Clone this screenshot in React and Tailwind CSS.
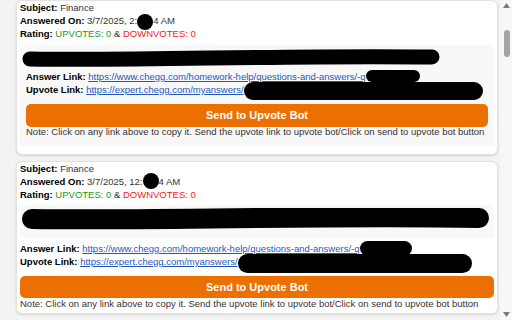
import React from 'react';

// redaction marks drawn over the screenshot text
const Blot = ({ className }) => (
  <span className={`relative inline-block rounded-full bg-black align-middle ${className}`} />
);

function Meta({ time, dot, rest }) {
  return (
    <>
      <p className="h-[13px] leading-[13px]">
        <b className="text-black">Subject:</b> <span className="text-[#333]">Finance</span>
      </p>
      <p className="h-[13px] leading-[13px] whitespace-nowrap">
        <b className="text-black">Answered On:</b>{' '}
        <span className="text-[#333]">
          {time}
          <Blot className={dot} />
          {rest}
        </span>
      </p>
      <p className="h-[13px] leading-[13px]">
        <b className="text-black">Rating:</b>{' '}
        <span className="text-[#1e961e]">UPVOTES: 0</span>
        <span className="text-[#333]"> &amp; </span>
        <span className="text-[#f01c1c]">DOWNVOTES: 0</span>
      </p>
    </>
  );
}

function Links({ answerBlot, upvoteBlot }) {
  return (
    <>
      <p className="h-[13px] leading-[13px] whitespace-nowrap">
        <b className="text-black">Answer Link:</b>{' '}
        <a className="text-[#1f57c3] underline">https://www.chegg.com/homework-help/questions-and-answers/-q</a>
        <Blot className={answerBlot} />
      </p>
      <p className="h-[13px] leading-[13px] whitespace-nowrap">
        <b className="text-black">Upvote Link:</b>{' '}
        <a className="text-[#1f57c3] underline">https://expert.chegg.com/myanswers/</a>
        <Blot className={upvoteBlot} />
      </p>
    </>
  );
}

function SendButton({ className }) {
  return (
    <button className={`w-full rounded-[5px] bg-[#ec7000] text-[11px] font-bold text-white ${className}`}>
      Send to Upvote Bot
    </button>
  );
}

const note = 'Note: Click on any link above to copy it. Send the upvote link to upvote bot/Click on send to upvote bot button';

export default function App() {
  return (
    <div className="flex h-[320px] w-[512px] overflow-hidden bg-[#f3f3f3] font-['Liberation_Sans',Arial,sans-serif] text-[9.5px] text-[#333]">
      <div className="flex flex-1 flex-col gap-[6px] pl-4 pr-[2px]">
        {/* first answer, scrolled to its top */}
        <div className="rounded-md border border-[#e2e2e2] bg-white px-[3px] pb-[8px] shadow-sm">
          <Meta time="3/7/2025, 2:" dot="h-[16px] w-[16px] -my-[2px] top-[1px]" rest="4 AM" />
          <div className="mt-[5px] rounded bg-[#f8f8f8] px-[6px] pt-[4px] pb-[9px]">
            <svg className="-ml-[4px] block h-[21px] w-[420px]" viewBox="0 0 420 21">
              <path d="M8 10 C 120 12, 260 6, 410 8" stroke="#000" strokeWidth="15" strokeLinecap="round" fill="none" />
            </svg>
            <Links
              answerBlot="h-[12px] w-[54px] -top-[1px]"
              upvoteBlot="h-[18px] w-[239px] -my-[3px] top-[1px]"
            />
            <SendButton className="mt-[8px] h-[23px]" />
            <p className="h-[10px] leading-[10px] whitespace-nowrap">{note}</p>
          </div>
        </div>

        {/* second answer */}
        <div className="rounded-md border border-[#e2e2e2] bg-white px-[3px] pb-[4px] shadow-sm">
          <Meta time="3/7/2025, 12:" dot="h-[16px] w-[16px] -my-[2px] -top-[1px]" rest="4 AM" />
          <div className="mt-[4px] h-[33px] rounded bg-[#f8f8f8] px-[2px] pt-[3px]">
            <svg className="block h-[22px] w-[467px]" viewBox="0 0 467 22">
              <path d="M10 11 C 150 13, 300 7, 457 10" stroke="#000" strokeWidth="20" strokeLinecap="round" fill="none" />
            </svg>
          </div>
          <div className="mt-[4px]">
            <Links
              answerBlot="h-[15px] w-[52px] -my-[2px] -top-[1px]"
              upvoteBlot="h-[19px] w-[234px] -my-[4px] top-[1px]"
            />
          </div>
          <SendButton className="mt-[8px] h-[22px]" />
          <p className="h-[11px] leading-[11px] whitespace-nowrap">{note}</p>
        </div>
      </div>

      {/* scrollbar */}
      <div className="flex w-[12px] flex-col items-center justify-between bg-[#f7f7f7] py-[3px]">
        <div className="flex w-full flex-col items-center">
          <svg className="h-[5px] w-[7px]" viewBox="0 0 7 5"><path d="M3.5 0 L7 5 L0 5 Z" fill="#7a7a7a" /></svg>
          <div className="mt-[22px] ml-[2px] h-[27px] w-[6px] rounded-full bg-[#a4a4a4]" />
        </div>
        <svg className="h-[5px] w-[7px]" viewBox="0 0 7 5"><path d="M0 0 L7 0 L3.5 5 Z" fill="#7a7a7a" /></svg>
      </div>
    </div>
  );
}
